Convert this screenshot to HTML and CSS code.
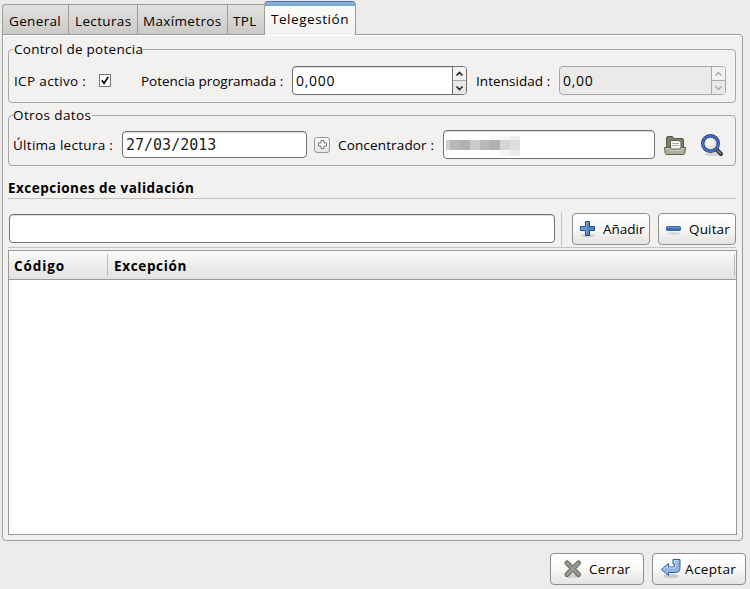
FILE: index.html
```html
<!DOCTYPE html>
<html lang="es">
<head>
<meta charset="utf-8">
<title>Telegestión</title>
<link rel="stylesheet" href="styles.css">
</head>
<body>
<nav class="tabs">
  <div class="tab t-general"><span>General</span></div>
  <div class="tab t-lecturas"><span>Lecturas</span></div>
  <div class="tab t-max"><span>Maxímetros</span></div>
  <div class="tab t-tpl"><span>TPL</span></div>
  <div class="tab active"><span>Telegestión</span></div>
</nav>
<main class="panel">
  <section class="group power">
    <div class="legend lg1"><span>Control de potencia</span></div>
    <label class="w-icp">ICP activo :</label>
    <div class="check"><svg width="11" height="11" viewBox="0 0 11 11"><path d="M2 5.200L4.500 8.500 9 1.500" fill="none" stroke="#000" stroke-width="1.800"/></svg></div>
    <label class="w-pot">Potencia programada :</label>
    <div class="entry spin"><span class="value">0,000</span><div class="steps">
      <i><svg width="9" height="6" viewBox="0 0 9 6"><path d="M1.5 4.5l3-3 3 3"/></svg></i><i><svg width="9" height="6" viewBox="0 0 9 6"><path d="M1.5 1.5l3 3 3-3"/></svg></i></div></div>
    <label class="w-int">Intensidad :</label>
    <div class="entry spin disabled"><span class="value">0,00</span><div class="steps">
      <i><svg width="9" height="6" viewBox="0 0 9 6"><path d="M1.5 4.5l3-3 3 3"/></svg></i><i><svg width="9" height="6" viewBox="0 0 9 6"><path d="M1.5 1.5l3 3 3-3"/></svg></i></div></div>
  </section>
  <section class="group other">
    <div class="legend lg2"><span>Otros datos</span></div>
    <label class="w-ult">Última lectura :</label>
    <div class="entry date"><span class="mono">27/03/2013</span></div>
    <div class="mini"><svg width="9" height="9" viewBox="0 0 9 9"><path d="M3 .5h3V3h2.500v3H6v2.500H3V6H.5V3H3z" fill="#fff" stroke="#777"/></svg></div>
    <label class="w-con">Concentrador :</label>
    <div class="entry hub"><div class="mosaic"><b></b><b></b><b></b><b></b><b></b><b></b><b></b><b></b></div></div>
    <svg class="folder" width="24" height="22" viewBox="0 0 24 22">
      <path d="M3.500 14V3q0-1.500 1.500-1.500h4q1 0 1.500 2H19q1.500 0 1.500 1.500v9z" fill="#7c7f6a" stroke="#555846"/>
      <path d="M7.500 5.500h8.500l2 2V15H7.500z" fill="#f6f6f2" stroke="#5e614f"/>
      <path d="M9 8.500h7M9 10.500h7" stroke="#aaa"/>
      <path d="M1.500 12.500H7l1 1.500h9l1-1.500h4.500l-.7 5.500q-.2 1.500-1.500 1.500H3.700Q2.400 19.500 2.200 18z" fill="#adb098" stroke="#5e614f"/>
      <path d="M3 13.800h3.500l1 1.500h10l1-1.500H21" fill="none" stroke="#d2d4c4"/>
    </svg>
    <svg class="lens" width="24" height="25" viewBox="0 0 24 25">
      <ellipse cx="13" cy="21" rx="8" ry="2" fill="#000" opacity=".12"/>
      <path d="M16 16l5 5" stroke="#333" stroke-width="4" stroke-linecap="round"/>
      <path d="M17 17l4 4" stroke="#8b8b86" stroke-width="1.300"/>
      <circle cx="10.500" cy="10.500" r="7.800" fill="#e0e0de" stroke="#203f87" stroke-width="3.400"/>
      <circle cx="10.500" cy="10.500" r="7.800" fill="none" stroke="#5378c8" stroke-width="1.500"/>
      <circle cx="9.500" cy="9.500" r="4" fill="#fff" opacity=".7"/>
    </svg>
  </section>
  <h2><span>Excepciones de validación</span></h2>
  <div class="toolbar">
    <div class="entry search"></div>
    <div class="vline"></div>
    <button class="btn add"><svg width="18" height="18" viewBox="0 0 18 18"><ellipse cx="9" cy="15.500" rx="7" ry="1.800" fill="#000" opacity=".13"/><path d="M6.500 1.500h4v5h5v4h-5v5h-4v-5h-5v-4h5z" fill="#4f83c4" stroke="#204a87"/><path d="M7.500 14.500v-5h-5v-2h5v-5h2" fill="none" stroke="#84abdb"/></svg><span>Añadir</span></button>
    <button class="btn del"><svg width="18" height="18" viewBox="0 0 18 18"><ellipse cx="9" cy="13.500" rx="7" ry="1.500" fill="#000" opacity=".1"/><rect x="1.500" y="6.500" width="14" height="4" rx=".8" fill="#3c70b4" stroke="#3465a4"/><path d="M2.500 7.500h12" stroke="#6f9bd0"/></svg><span>Quitar</span></button>
  </div>
  <div class="table">
    <div class="thead"><div class="c1"><span>Código</span></div><div class="c2"><span>Excepción</span></div></div>
  </div>
</main>
<footer>
  <button class="btn close"><svg width="20" height="20" viewBox="0 0 20 20"><ellipse cx="10" cy="17" rx="8" ry="2" fill="#000" opacity=".12"/><path d="M4 4l11.500 11.500M15.500 4L4 15.500" stroke="#666864" stroke-width="5" stroke-linecap="round"/><path d="M4 4l11.500 11.500M15.500 4L4 15.500" stroke="#979994" stroke-width="3" stroke-linecap="round"/></svg><span>Cerrar</span></button>
  <button class="btn ok"><svg width="22" height="20" viewBox="0 0 22 20"><ellipse cx="11" cy="17" rx="8" ry="2" fill="#000" opacity=".15"/><path d="M1.500 10.500l7-6v3.500h4.500q1.500 0 1.500-2v-1h-1.500V.5h7v8q0 5-4.500 5H8.500v3z" fill="#8fb5de" stroke="#315f9e" stroke-linejoin="round"/><path d="M3.200 10.500l4.300-3.600V9H14q1.800 0 1.800-3V3.500h-1.500v-1.900h4" fill="none" stroke="#c6dbf0"/></svg><span>Aceptar</span></button>
</footer>
</body>
</html>
```
FILE: styles.css
```css
* { box-sizing: border-box; }
body {
  margin: 0; width: 750px; height: 589px; overflow: hidden;
  background: #edeceb; color: #000;
  font: 13.5px/18px "Open Sans", "Noto Sans", sans-serif;
  padding: 1px 0 0 2px; white-space: nowrap;
}
.tabs { display: flex; align-items: flex-end; height: 34px; position: relative; z-index: 1; letter-spacing: .35px; }
.tab {
  height: 31px; border: 1px solid #9c9b99; border-right: 0;
  background: linear-gradient(#e2e1df, #cbcac7); padding: 7px 0 0 6px;
}
.t-general { width: 66px; border-radius: 4px 0 0 0; }
.t-lecturas { width: 69px; }
.t-max { width: 90px; padding-left: 5px; }
.t-tpl { width: 37px; padding-left: 5px; }
.tab.active {
  width: 92px; height: 34px; padding: 8px 0 0 6px; border: 1px solid #9c9b99; border-bottom: 0;
  border-radius: 4px 4px 0 0; border-top-color: #4d75a5; letter-spacing: .55px;
  background: linear-gradient(#8db3df 0, #7aa3d5 4px, #fbfbfa 4px, #f2f1f0 100%);
}
.panel {
  width: 741px; height: 507px; margin-top: -1px; padding: 14px 5px 0 5px;
  border: 1px solid #9c9b99; border-radius: 0 4px 4px 4px; background: #f2f1f0;
  box-shadow: inset 1px 1px #fff;
}
.group {
  position: relative; display: flex; align-items: center;
  border: 1px solid #a9a7a4; border-radius: 4px; padding-left: 5px; width: 728px;
}
.power { height: 54px; padding-top: 9px; }
.other { height: 51px; margin-top: 12px; padding-top: 8px; }
.legend { position: absolute; left: 4px; top: -10px; background: #f2f1f0; letter-spacing: .27px; }
.lg1 { width: 130px; padding-left: 1px; }
.lg2 { width: 79px; letter-spacing: .4px; }
.w-icp { width: 85px; letter-spacing: .35px; }
.check { width: 12px; height: 13px; border: 1px solid #777; background: #fff; display: flex; align-items: center; justify-content: center; }
.w-pot { width: 151px; margin-left: 30px; letter-spacing: -.03px; }
.w-int { width: 83px; margin-left: 9px; letter-spacing: .05px; }
.w-ult { width: 109px; margin-left: -1px; letter-spacing: .28px; }
.w-con { width: 105px; margin-left: 8px; letter-spacing: .15px; }
.entry {
  height: 29px; border: 1px solid #72706c; border-radius: 4px; background: #fff;
  display: flex; align-items: center; padding-left: 4px; box-shadow: inset 0 1px #dddcda;
}
.spin { width: 175px; padding-left: 3px; }
.value { flex: 1; font-size: 14px; letter-spacing: .7px; }
.steps { width: 14px; height: 100%; border-left: 1px solid #72706c; display: flex; flex-direction: column; background: #f4f3f2; border-radius: 0 3px 3px 0; }
.steps i { flex: 1; display: flex; align-items: center; justify-content: center; }
.steps i + i { border-top: 1px solid #aaa8a5; background: #e9e8e6; border-radius: 0 0 3px 0; }
.steps path { fill: none; stroke: #222; stroke-width: 1.6; }
.disabled { width: 167px; background: #ebeae9; border-color: #a9a7a4; box-shadow: none; }
.disabled .steps { border-color: #a9a7a4; }
.disabled .steps path { stroke: #a3a19e; stroke-width: 1.2; }
.date { width: 185px; height: 27px; padding-left: 3px; }
.mono { font: 15px/18px "DejaVu Sans Mono", monospace; color: #1c1c1c; }
.mini { width: 16px; height: 16px; margin-left: 7px; border: 1px solid #999794; border-radius: 3px; background: linear-gradient(#fff, #e4e3e1); display: flex; align-items: center; justify-content: center; }
.hub { width: 212px; padding-left: 2px; }
.mosaic { display: flex; height: 21px; padding-top: 6px; }
.mosaic b { width: 10px; height: 10px; background: #b8b8b8; }
.mosaic b:nth-child(1) { width: 4px; background: #cecece; }
.mosaic b:nth-child(3) { background: #b1b1b1; }
.mosaic b:nth-child(4) { background: #cbcbcb; }
.mosaic b:nth-child(6) { background: #b0b0b0; box-shadow: 0 -4px #f8f8f8; }
.mosaic b:nth-child(7) { background: #d5d5d5; box-shadow: 0 -4px #f8f8f8, 0 6px #f5f5f5; }
.mosaic b:nth-child(8) { background: #dedede; box-shadow: 0 -4px #efefef, 0 6px #ebebeb; }
.folder { margin-left: 8px; margin-top: 2px; }
.lens { margin-left: 13px; margin-top: 1px; }
h2 { margin: 13px 0 0; height: 20px; font-size: 13.5px; line-height: 18px; font-weight: 700; width: 728px; border-bottom: 1px solid #c5c3c0; letter-spacing: .48px; }
.toolbar { display: flex; align-items: center; height: 49px; padding: 11px 0 0 1px; width: 728px; border-bottom: 1px solid #c5c3c0; }
.search { width: 546px; }
.vline { width: 1px; height: 34px; margin-left: 6px; background: #c5c3c0; }
.btn {
  height: 32px; border: 1px solid #8f8d8a; border-radius: 4px; color: #000; padding: 0;
  background: linear-gradient(#fff, #f8f8f7 50%, #e4e3e1); font: inherit;
  display: flex; align-items: center; flex: none;
}
.add { width: 78px; margin-left: 10px; padding-left: 6px; }
.del { width: 78px; margin-left: 8px; padding-left: 6px; letter-spacing: .15px; }
.add span, .del span { margin-left: 6px; }
.table { width: 729px; height: 285px; margin-top: 2px; border: 1px solid #9c9895; background: #fff; }
.thead { height: 29px; display: flex; align-items: center; font-weight: 700; letter-spacing: .65px; border-bottom: 1px solid #9c9895; background: linear-gradient(#fafaf9, #e3e2e0); }
.c1 { width: 99px; height: 22px; padding: 3px 0 0 5px; border-right: 1px solid #bebcb9; letter-spacing: .9px; }
.c2 { width: 627px; height: 22px; padding: 3px 0 0 6px; border-right: 1px solid #bebcb9; }
footer { display: flex; margin: 12px 0 0 548px; }
.close { width: 94px; padding-left: 12px; letter-spacing: .2px; }
.close span { margin-left: 6px; }
.ok { width: 94px; margin-left: 8px; padding-left: 7px; letter-spacing: .35px; }
.ok span { margin-left: 3px; }
```
